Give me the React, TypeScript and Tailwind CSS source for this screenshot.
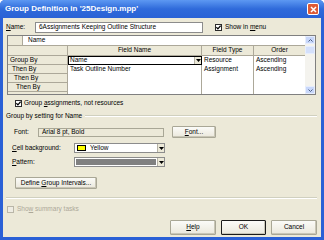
import React from "react";

const Check = ({ disabled }: { disabled?: boolean }) => (
  <div
    className={`w-[7px] h-[7px] border flex items-center justify-center shrink-0 ${
      disabled ? "border-[#b9b6a8] bg-[#eeece3]" : "border-[#2b2b2b] bg-white"
    }`}
  >
    {!disabled && (
      <svg width="5" height="5" viewBox="0 0 5 5">
        <path d="M0.4 2.2 L1.9 3.8 L4.6 0.7" stroke="#000" strokeWidth="1.2" fill="none" />
      </svg>
    )}
  </div>
);

const Arrow = () => (
  <div className="w-[7px] h-full bg-[#ECE9D8] border-l border-[#b5b2a5] flex items-center justify-center shrink-0">
    <svg width="5" height="3" viewBox="0 0 5 3">
      <path d="M0 0 H5 L2.5 3 Z" fill="#000" />
    </svg>
  </div>
);

const Btn = ({ children, w, def }: { children: React.ReactNode; w: string; def?: boolean }) => (
  <div
    className={`${w} h-full flex items-center justify-center bg-gradient-to-b from-[#fbfbf8] to-[#ebe8dc] ${
      def ? "border border-[#1b1b1b]" : "border border-[#a9a796]"
    } rounded-[1px] shadow-[inset_-1px_-1px_0_#c9c6b6]`}
  >
    {children}
  </div>
);

export default function App() {
  return (
    <div className="w-[324px] h-[240px] flex flex-col bg-[#2a60d6] font-['Liberation_Sans',Arial,sans-serif] text-[6.5px] leading-none text-black overflow-hidden rounded-t-[5px]">
      {/* Title bar */}
      <div className="h-[18px] shrink-0 flex items-center pl-[5px] pr-[5px] bg-gradient-to-b from-[#5d98f2] via-[#2f6ada] to-[#2a62d6]">
        <span className="text-white font-bold text-[8px]">Group Definition in '25Design.mpp'</span>
        <div className="ml-auto w-[12px] h-[12px] rounded-[2px] border border-white bg-[#de5a35] flex items-center justify-center">
          <svg width="7" height="7" viewBox="0 0 7 7">
            <path d="M1 1 L6 6 M6 1 L1 6" stroke="#fff" strokeWidth="1.5" />
          </svg>
        </div>
      </div>

      {/* Body */}
      <div className="flex-1 mx-[3px] mb-[3px] bg-[#ECE9D8] flex flex-col">
        {/* Name row */}
        <div className="mt-[4px] h-[11px] flex items-center shrink-0">
          <span className="ml-[3px] w-[29px]">
            <span className="underline">N</span>ame:
          </span>
          <div className="w-[168px] h-full bg-white border border-[#8c8c8c] flex items-center pl-[3px]">
            6Assignments Keeping Outline Structure
          </div>
          <div className="ml-[12px]">
            <Check />
          </div>
          <span className="ml-[3px]">
            Show in <span className="underline">m</span>enu
          </span>
        </div>

        {/* Table */}
        <div className="mt-[2px] ml-[4px] w-[309px] h-[60px] border border-[#7f7f7f] flex shrink-0 bg-white">
          <div className="flex-1 flex flex-col">
            <div className="h-[10px] flex">
              <div className="w-[15px] bg-[#ECE9D8] border-r border-b border-[#aca899]" />
              <div className="flex-1 flex items-center pl-[5px] border-b border-[#aca899]">Name</div>
            </div>
            <div className="h-[10px] flex bg-[#ECE9D8] border-b border-[#aca899]">
              <div className="w-[60px] border-r border-[#aca899]" />
              <div className="w-[134px] border-r border-[#aca899] flex items-center justify-center">Field Name</div>
              <div className="w-[52px] border-r border-[#aca899] flex items-center justify-center">Field Type</div>
              <div className="flex-1 flex items-center justify-center">Order</div>
            </div>
            {[
              { h: "Group By", pl: "pl-[2px]", name: "Name", type: "Resource", order: "Ascending", sel: true },
              { h: "Then By", pl: "pl-[4px]", name: "Task Outline Number", type: "Assignment", order: "Ascending" },
              { h: "Then By", pl: "pl-[6px]", name: "", type: "", order: "" },
              { h: "Then By", pl: "pl-[8px]", name: "", type: "", order: "" },
            ].map((r, i) => (
              <div key={i} className="h-[9px] flex">
                <div className={`w-[60px] bg-[#ECE9D8] border-r border-b border-[#aca899] flex items-center ${r.pl}`}>{r.h}</div>
                {r.sel ? (
                  <div className="w-[134px] border border-black flex items-center">
                    <span className="flex-1 pl-[1px]">{r.name}</span>
                    <Arrow />
                  </div>
                ) : (
                  <div className="w-[134px] border-r border-[#aca899] flex items-center pl-[2px]">{r.name}</div>
                )}
                <div className="w-[52px] border-r border-[#aca899] flex items-center pl-[2px]">{r.type}</div>
                <div className="flex-1 flex items-center pl-[2px]">{r.order}</div>
              </div>
            ))}
            <div className="flex-1 flex">
              <div className="w-[60px] bg-[#ECE9D8] border-r border-[#aca899]" />
              <div className="w-[134px] border-r border-[#aca899]" />
              <div className="w-[52px] border-r border-[#aca899]" />
              <div className="flex-1" />
            </div>
          </div>
          {/* Scrollbar */}
          <div className="w-[10px] bg-[#f4f3ee] flex flex-col items-center">
            <div className="w-[10px] h-[8px] bg-[#c8d7fa] border border-[#e6edfd] rounded-[1px] flex items-center justify-center">
              <svg width="5" height="3" viewBox="0 0 5 3">
                <path d="M0.5 2.5 L2.5 0.5 L4.5 2.5" stroke="#4d6185" strokeWidth="1" fill="none" />
              </svg>
            </div>
            <div className="mt-[2px] w-[10px] h-[8px] bg-[#d4e0fb] border border-[#e6edfd] rounded-[1px]" />
            <div className="flex-1" />
            <div className="w-[10px] h-[8px] bg-[#c8d7fa] border border-[#e6edfd] rounded-[1px] flex items-center justify-center">
              <svg width="5" height="3" viewBox="0 0 5 3">
                <path d="M0.5 0.5 L2.5 2.5 L4.5 0.5" stroke="#4d6185" strokeWidth="1" fill="none" />
              </svg>
            </div>
          </div>
        </div>

        {/* Group assignments */}
        <div className="mt-[4px] h-[8px] flex items-center shrink-0">
          <div className="ml-[12px]">
            <Check />
          </div>
          <span className="ml-[2px]">
            Group <span className="underline">a</span>ssignments, not resources
          </span>
        </div>

        {/* Group by setting */}
        <div className="mt-[5px] h-[8px] flex items-center shrink-0 mr-[4px]">
          <span className="ml-[3px]">Group by setting for Name</span>
          <div className="flex-1 ml-[3px] h-[2px] border-t border-[#d0d0bf] border-b border-b-white" />
        </div>

        {/* Font */}
        <div className="mt-[6px] h-[12px] flex items-center shrink-0">
          <span className="ml-[11px] w-[24px]">Font:</span>
          <div className="w-[126px] h-[9px] border border-[#a9a796] bg-[#ECE9D8] flex items-center pl-[3px]">
            Arial 8 pt, Bold
          </div>
          <div className="ml-[8px] h-full">
            <Btn w="w-[44px]">
              <span>
                <span className="underline">F</span>ont...
              </span>
            </Btn>
          </div>
        </div>

        {/* Cell background */}
        <div className="mt-[5px] h-[10px] flex items-center shrink-0">
          <span className="ml-[9px] w-[62px]">
            <span className="underline">C</span>ell background:
          </span>
          <div className="w-[91px] h-full bg-white border border-[#8c8c8c] flex items-center">
            <div className="ml-[2px] w-[9px] h-[6px] bg-[#ffff00] border border-black" />
            <span className="ml-[4px] flex-1">Yellow</span>
            <Arrow />
          </div>
        </div>

        {/* Pattern */}
        <div className="mt-[4px] h-[10px] flex items-center shrink-0">
          <span className="ml-[9px] w-[62px]">
            <span className="underline">P</span>attern:
          </span>
          <div className="w-[91px] h-full bg-white border border-[#8c8c8c] flex items-center">
            <div className="flex-1 h-full border border-white bg-[#808080]" />
            <Arrow />
          </div>
        </div>

        {/* Define group intervals */}
        <div className="mt-[10px] h-[12px] ml-[12px] flex shrink-0">
          <Btn w="w-[82px]">
            <span>
              Define <span className="underline">G</span>roup Intervals...
            </span>
          </Btn>
        </div>

        {/* Separator */}
        <div className="mt-[8px] ml-[3px] mr-[4px] h-[2px] border-t border-[#d0d0bf] border-b border-b-white shrink-0" />

        {/* Show summary tasks */}
        <div className="mt-[6px] h-[8px] flex items-center shrink-0">
          <div className="ml-[4px]">
            <Check disabled />
          </div>
          <span className="ml-[3px] text-[#aca899]">
            Sho<span className="underline">w</span> summary tasks
          </span>
        </div>

        {/* Buttons */}
        <div className="mt-[7px] h-[15px] flex justify-end mr-[4px] gap-[5px] shrink-0">
          <Btn w="w-[46px]">
            <span>
              <span className="underline">H</span>elp
            </span>
          </Btn>
          <Btn w="w-[45px]" def>
            OK
          </Btn>
          <Btn w="w-[46px]">Cancel</Btn>
        </div>
      </div>
    </div>
  );
}
